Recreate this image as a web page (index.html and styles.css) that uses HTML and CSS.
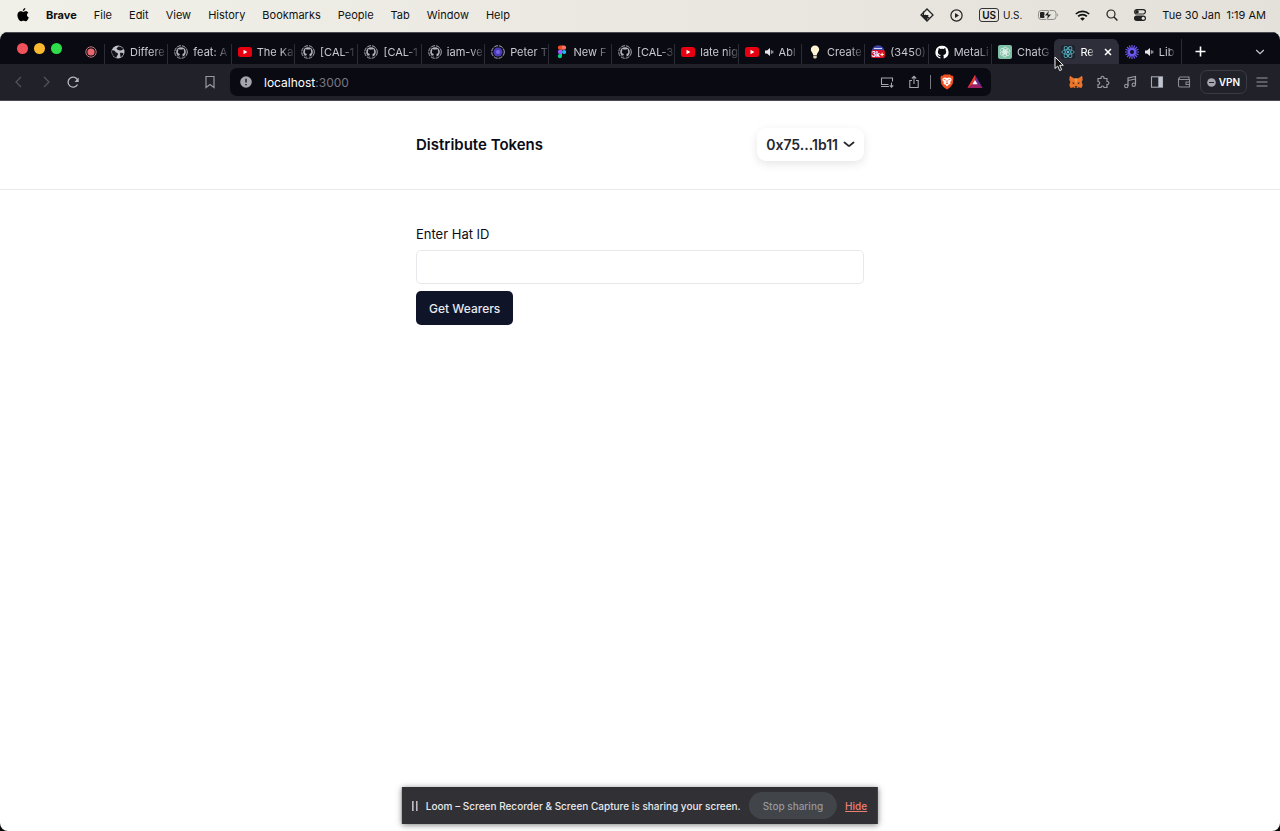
FILE: index.html
```html
<!DOCTYPE html>
<html lang="en">
<head>
  <meta charset="UTF-8">
  <meta name="viewport" content="width=device-width, initial-scale=1.0">
  <title>Distribute Tokens</title>
  <link rel="stylesheet" href="styles.css">
</head>
<body>

  <!-- Shared icons -->
  <svg class="sprite" aria-hidden="true">
    <symbol id="github-ring" viewBox="0 0 14 14">
      <circle cx="7" cy="7" r="6.3" fill="none" stroke="#a9a9b2" stroke-width="1" stroke-dasharray="4 1"/>
      <circle cx="7" cy="7" r="4.8" fill="#b4b4bc"/>
      <path d="M4.3 3.9l1.5.7a4.500 4.500 0 0 1 2.400 0l1.500-.7c.3.700.2 1.200.1 1.500.9 1.200.6 3.300-1.500 3.700.3.400.3.700.3 2.800H5.600v-1.200c-.9.200-1.300-.3-1.600-.9.500.100.9.500 1.600.2 0-.400.100-.700.300-.9-2.200-.400-2.500-2.500-1.600-3.700-.1-.400-.2-.9 0-1.500z" fill="#0b0a13"/>
    </symbol>
    <symbol id="youtube" viewBox="0 0 14 14">
      <rect x="0" y="2" width="14" height="10" rx="2.500" fill="#e60010"/>
      <path d="M5.500 4.800v4.400L9.400 7z" fill="#fff"/>
    </symbol>
    <symbol id="speaker" viewBox="0 0 10 10">
      <path d="M1 3.500h2L6 1v8L3 6.500H1z" fill="#e6e6ea"/>
      <path d="M7.300 3.200v3.600M8.800 3.700v2.600" stroke="#c6c6cc" stroke-width=".9"/>
    </symbol>
  </svg>

  <!-- System menu bar -->
  <header class="menubar">
    <svg class="apple" viewBox="0 0 12 14"><path d="M8.300 0c.1 1.600-1.100 2.900-2.500 2.900C5.700 1.500 7 .2 8.300 0zM11.300 4.800c-2 1.200-1.600 3.900.5 4.700-.6 1.700-1.700 3.800-3 3.800-.9 0-1.300-.5-2.400-.5s-1.500.5-2.300.5C2.300 13.300.4 10 .4 7.300c0-2.700 1.700-4.100 3.300-4.100 1.100 0 1.900.7 2.600.7.600 0 1.600-.8 3-.7.8 0 1.600.5 2 1.600z"/></svg>
    <nav class="menus">
      <b>Brave</b>
      <span>File</span>
      <span>Edit</span>
      <span>View</span>
      <span>History</span>
      <span>Bookmarks</span>
      <span>People</span>
      <span>Tab</span>
      <span>Window</span>
      <span>Help</span>
    </nav>
    <div class="status">
      <svg width="14" height="14" viewBox="0 0 14 14"><path d="M7 1L13 7 7 13 1 7z" fill="#efeee8" stroke="#222" stroke-width="1.300"/><path d="M1 7h7.500L7 13z" fill="#222"/><path d="M3.500 3.500V7M5 7l4.500 3.500" stroke="#222" stroke-width="1.200"/></svg>
      <svg width="13" height="13" viewBox="0 0 13 13"><circle cx="6.500" cy="6.500" r="5.600" fill="none" stroke="#222" stroke-width="1.200"/><path d="M5 4v5l4-2.500z" fill="#222"/></svg>
      <span class="input-source"><b>US</b><small>U.S.</small></span>
      <svg width="21" height="12" viewBox="0 0 21 12"><rect x=".5" y="1.500" width="17.500" height="9" rx="2.800" fill="none" stroke="#8c8b87"/><rect x="2" y="3" width="4.500" height="6" rx="1" fill="#222"/><path d="M19.300 4.500c1.300.5 1.300 2.500 0 3z" fill="#8c8b87"/><path d="M11.500.8L6.200 6.800h3.200l-1 4.400 5.300-6h-3.200z" fill="#222" stroke="#e9e8e1" stroke-width=".7"/></svg>
      <svg width="15" height="11" viewBox="0 0 15 11"><path d="M.8 4a9.600 9.600 0 0 1 13.400 0M3.100 6.400a6.300 6.300 0 0 1 8.800 0" fill="none" stroke="#111" stroke-width="1.700"/><path d="M5.200 8.500a3.400 3.400 0 0 1 4.600 0L7.500 10.800z" fill="#111"/></svg>
      <svg width="12" height="12" viewBox="0 0 12 12"><circle cx="5" cy="5" r="4" fill="none" stroke="#222" stroke-width="1.200"/><path d="M8 8l3.400 3.400" stroke="#222" stroke-width="1.400"/></svg>
      <svg width="12" height="12" viewBox="0 0 12 12"><rect x=".6" y=".6" width="10.800" height="4.400" rx="2.200" fill="none" stroke="#222" stroke-width="1.200"/><circle cx="3" cy="2.800" r="1.800" fill="#222"/><rect x="0" y="6.500" width="12" height="5.500" rx="2.700" fill="#222"/><circle cx="9.200" cy="9.200" r="1.500" fill="#e9e8e1"/></svg>
      <time class="clock"><span>Tue 30 Jan</span><span>1:19 AM</span></time>
    </div>
  </header>

  <div class="window">

    <!-- Tabs -->
    <div class="tabstrip">
      <div class="lights">
        <i class="light red"></i>
        <i class="light yellow"></i>
        <i class="light green"></i>
      </div>
      <button class="pinned" aria-label="Recording">
        <svg width="12" height="12" viewBox="0 0 12 12"><circle cx="6" cy="6" r="5.200" fill="none" stroke="#b9777d"/><circle cx="6" cy="6" r="3.600" fill="#ea686d"/></svg>
      </button>
      <div class="tabs">
        <div class="tab"><button class="tab-open">
          <svg class="favicon" viewBox="0 0 14 14"><circle cx="7" cy="7" r="6.500" fill="#c0c0c6"/><path d="M1 5.500c2-.5 3 .5 3.500 1.500s2.500.5 2.500 2-1.500 1.500-1.500 3.800C2.500 12 .5 9 1 5.500zM7.500 1.500c2.500-.2 4 1.300 5 3-1.500-.3-2 1.300-3.500 1S6 4.500 5.500 3.500zM9 8c1.500-.5 3 0 3.500.5-.5 2-1.500 3-3 3.700z" fill="#14131c"/></svg>
          <span class="title">Differe</span></button></div>
        <div class="tab"><button class="tab-open"><svg class="favicon"><use href="#github-ring"/></svg><span class="title">feat: A</span></button></div>
        <div class="tab"><button class="tab-open"><svg class="favicon"><use href="#youtube"/></svg><span class="title">The Ka</span></button></div>
        <div class="tab"><button class="tab-open"><svg class="favicon"><use href="#github-ring"/></svg><span class="title">[CAL-1</span></button></div>
        <div class="tab"><button class="tab-open"><svg class="favicon"><use href="#github-ring"/></svg><span class="title">[CAL-1</span></button></div>
        <div class="tab"><button class="tab-open"><svg class="favicon"><use href="#github-ring"/></svg><span class="title">iam-ve</span></button></div>
        <div class="tab"><button class="tab-open">
          <svg class="favicon" viewBox="0 0 14 14"><circle cx="7" cy="7" r="6.300" fill="none" stroke="#a9a9b2" stroke-dasharray="4 1"/><circle cx="7" cy="7" r="4.500" fill="#4b3bb8"/><circle cx="7" cy="7" r="2" fill="#7567e6"/></svg>
          <span class="title">Peter T</span></button></div>
        <div class="tab"><button class="tab-open">
          <svg class="favicon" viewBox="0 0 14 14"><path d="M7 .500H5a2.100 2.100 0 0 0 0 4.300h2z" fill="#f24e1e"/><path d="M7 .500h2a2.100 2.100 0 0 1 0 4.300H7z" fill="#ff7262"/><path d="M7 4.800H5a2.100 2.100 0 0 0 0 4.300h2z" fill="#a259ff"/><circle cx="9.100" cy="7" r="2.100" fill="#1abcfe"/><path d="M7 9.100H5a2.100 2.100 0 1 0 2 2.200z" fill="#0acf83"/></svg>
          <span class="title">New F</span></button></div>
        <div class="tab"><button class="tab-open"><svg class="favicon"><use href="#github-ring"/></svg><span class="title">[CAL-3</span></button></div>
        <div class="tab"><button class="tab-open"><svg class="favicon"><use href="#youtube"/></svg><span class="title">late nig</span></button></div>
        <div class="tab"><button class="tab-open"><svg class="favicon"><use href="#youtube"/></svg><svg class="speaker"><use href="#speaker"/></svg><span class="title">Abl</span></button></div>
        <div class="tab"><button class="tab-open">
          <svg class="favicon" viewBox="0 0 14 14"><path d="M7 .5c2.500 0 4.200 1.800 4.200 4 0 2.500-2.200 3-2.400 5.500H5.200C5 7.500 2.800 7 2.800 4.500 2.800 2.300 4.500.5 7 .5z" fill="#fff5d2"/><path d="M5.300 10.400h3.400v2L8 13.500H6l-.7-1.100z" fill="#d8d0b2"/></svg>
          <span class="title">Create</span></button></div>
        <div class="tab"><button class="tab-open">
          <svg class="favicon" viewBox="0 0 14 14"><circle cx="7" cy="6.500" r="6.300" fill="#4146ad"/><path d="M3 3.500h8" stroke="#d8d8f0"/><rect x="0" y="5" width="14" height="8" rx="2" fill="#d5132b"/><text x="7" y="11.500" text-anchor="middle" class="badge">3k+</text></svg>
          <span class="title">(3450)</span></button></div>
        <div class="tab"><button class="tab-open">
          <svg class="favicon" viewBox="0 0 16 16"><path fill="#fff" d="M8 .8a7.500 7.500 0 0 0-2.400 14.600c.4.100.5-.2.500-.4v-1.400c-2.100.5-2.500-1-2.500-1-.3-.9-.8-1.100-.8-1.100-.7-.5.100-.5.100-.5.700.1 1.100.8 1.100.8.700 1.100 1.800.8 2.200.6.100-.5.300-.8.500-1-1.700-.2-3.400-.8-3.400-3.700 0-.8.300-1.500.8-2-.1-.2-.3-1 .1-2 0 0 .6-.2 2 .8a7 7 0 0 1 3.700 0c1.400-1 2-.8 2-.8.4 1 .2 1.800.1 2 .5.500.8 1.200.8 2 0 2.900-1.800 3.500-3.400 3.700.3.200.5.700.5 1.400V15c0 .2.100.5.500.4A7.500 7.500 0 0 0 8 .8z"/></svg>
          <span class="title">MetaLi</span></button></div>
        <div class="tab"><button class="tab-open">
          <svg class="favicon" viewBox="0 0 14 14"><rect width="14" height="14" rx="2" fill="#7fbfa6"/><g fill="none" stroke="#e4f5ee" stroke-width=".7"><rect x="5.500" y="2" width="3.500" height="6" rx="1.700"/><rect x="5.500" y="2" width="3.500" height="6" rx="1.700" transform="rotate(60 7 7)"/><rect x="5.500" y="2" width="3.500" height="6" rx="1.700" transform="rotate(120 7 7)"/><rect x="5.500" y="2" width="3.500" height="6" rx="1.700" transform="rotate(180 7 7)"/><rect x="5.500" y="2" width="3.500" height="6" rx="1.700" transform="rotate(240 7 7)"/><rect x="5.500" y="2" width="3.500" height="6" rx="1.700" transform="rotate(300 7 7)"/></g></svg>
          <span class="title">ChatG</span></button></div>
        <div class="tab active"><button class="tab-open">
          <svg class="favicon" viewBox="0 0 14 14"><rect width="14" height="14" rx="2" fill="#20232a"/><g fill="none" stroke="#4fa9bd" stroke-width=".9"><ellipse cx="7" cy="7" rx="6.200" ry="2.400"/><ellipse cx="7" cy="7" rx="6.200" ry="2.400" transform="rotate(60 7 7)"/><ellipse cx="7" cy="7" rx="6.200" ry="2.400" transform="rotate(120 7 7)"/></g><circle cx="7" cy="7" r="1.200" fill="#5fc4da"/></svg>
          <span class="title">Re</span></button>
          <button class="tab-close" aria-label="Close tab"><svg width="8" height="8" viewBox="0 0 8 8"><path d="M1 1l6 6M7 1L1 7" stroke="#fff" stroke-width="1.500"/></svg></button>
          <!-- Mouse pointer -->
          <svg class="pointer" width="11" height="16" viewBox="0 0 11 16"><path d="M1 1v11.500l2.700-2.400 2 4.500 2-.9-2-4.400h3.600z" fill="#111" stroke="#eee" stroke-width="1"/></svg>
        </div>
        <div class="tab"><button class="tab-open">
          <svg class="favicon" viewBox="0 0 14 14"><g stroke="#6a58f2" stroke-width="1.200"><path d="M7 0v14M0 7h14M2 2l10 10M12 2L2 12M4.300.5l5.400 13M9.700.5l-5.400 13M.5 4.300l13 5.400M.5 9.700l13-5.400"/></g><circle cx="7" cy="7" r="4" fill="#6a58f2"/><circle cx="7" cy="7" r="2" fill="#100f20"/></svg>
          <svg class="speaker"><use href="#speaker"/></svg><span class="title">Lib</span></button></div>
      </div>
      <button class="new-tab" aria-label="New tab"><svg width="11" height="11" viewBox="0 0 11 11"><path d="M5.500.5v10M.5 5.500h10" stroke="#fff" stroke-width="1.600"/></svg></button>
      <button class="tab-search" aria-label="Search tabs"><svg width="10" height="6" viewBox="0 0 10 6"><path d="M1.200 1L5 4.600 8.800 1" fill="none" stroke="#c4c4cb" stroke-width="1.300"/></svg></button>
    </div>

    <!-- Toolbar -->
    <div class="toolbar">
      <div class="tools-left">
        <button aria-label="Back"><svg width="14" height="14" viewBox="0 0 14 14"><path d="M9 2L4 7l5 5" fill="none" stroke="#55555f" stroke-width="1.200"/></svg></button>
        <button aria-label="Forward"><svg width="14" height="14" viewBox="0 0 14 14"><path d="M5 2l5 5-5 5" fill="none" stroke="#55555f" stroke-width="1.200"/></svg></button>
        <button aria-label="Reload"><svg width="14" height="14" viewBox="0 0 14 14"><path d="M11.500 9.500A5 5 0 1 1 11.800 5.500" fill="none" stroke="#b8b8c0" stroke-width="1.300"/><path d="M12.700 2.500v4.400H8.500z" fill="#b8b8c0"/></svg></button>
        <button class="bookmark" aria-label="Bookmark"><svg width="14" height="14" viewBox="0 0 14 14"><path d="M3 1.500h8v11L7 9.500l-4 3z" fill="none" stroke="#9797a0" stroke-width="1.200"/></svg></button>
      </div>
      <div class="urlbar">
        <svg width="12" height="12" viewBox="0 0 12 12"><circle cx="6" cy="6" r="5.800" fill="#a5a5af"/><path d="M6 2.800v3.800M6 7.900v1.400" stroke="#15141e" stroke-width="1.400"/></svg>
        <span class="url">localhost<em>:3000</em></span>
        <div class="url-actions">
          <button aria-label="Install app"><svg width="14" height="14" viewBox="0 0 14 14"><path d="M12.500 6.500V3h-11v6.500h7M1 11.500h8M11.500 7.500V12M9.700 10.300l1.800 1.800 1.800-1.800" fill="none" stroke="#a5a5af" stroke-width="1.100"/></svg></button>
          <button aria-label="Share"><svg width="14" height="14" viewBox="0 0 14 14"><path d="M5 5.500H2.800v7h8.400v-7H9M7 9V1.500M4.800 3.500L7 1.300l2.200 2.200" fill="none" stroke="#a5a5af" stroke-width="1.100"/></svg></button>
          <i class="divider"></i>
          <button aria-label="Brave Shields"><svg width="14" height="16" viewBox="0 0 14 16"><path d="M4 .5h6l1.300 1.300 1.700-.1L13.500 4l-.8 6L10 13.500 7 15.500 4 13.500 1.300 10 .5 4 1 1.700l1.700.1z" fill="#f25022"/><path d="M3 4l2-.5 2 .5 2-.5 2 .5.700 2-1.500 2 .3 1.800L8.300 11 7 12.500 5.700 11l-2.200-1.200L3.800 8 2.300 6z" fill="#fff"/><path d="M3.600 5.300l2 .6M10.400 5.300l-2 .6M7 6v3M5.700 10l1.300-.8 1.300.8" stroke="#f25022" stroke-width=".8" fill="none"/></svg></button>
          <button aria-label="Brave Rewards"><svg width="16" height="14" viewBox="0 0 16 14"><path d="M8 0L.5 13h15z" fill="#9e1f63"/><path d="M8 0l7.500 13L10.500 9 8 5z" fill="#662d91"/><path d="M8 0L.5 13l5-4L8 5z" fill="#e8392c"/><path d="M8 5l2.600 4.300H5.400z" fill="#fff"/></svg></button>
        </div>
      </div>
      <div class="tools-right">
        <button aria-label="MetaMask"><svg width="14" height="14" viewBox="0 0 14 14"><path d="M.8.8l4.400 2.700h3.600L13.200.8l.5 4-1 2.200 1 3-1.200 3-3-.8-1 .8h-3l-1-.8-3 .8-1.200-3 1-3-1-2.200z" fill="#e9752a"/><path d="M5.200 3.500L7 9l1.800-5.500z" fill="#f39a4b"/><path d="M3 7.500l2.400.3-.7 1.500zM11 7.500l-2.400.3.700 1.500zM5.600 11.300h2.800l-.5 1.500H6.100z" fill="#30211e"/></svg></button>
        <button aria-label="Extensions"><svg width="14" height="14" viewBox="0 0 14 14"><path d="M2 3.500h3c-.5-3 3.500-3 3 0h3v3c2.500-.3 2.500 3.300 0 3v3H8c0-2-3-2-3 0H2v-3c2.300 0 2.300-3 0-3z" fill="none" stroke="#9a9aa4" stroke-width="1.200"/></svg></button>
        <button aria-label="Playlist"><svg width="14" height="14" viewBox="0 0 14 14"><path d="M5 11V3l7.500-1.500v8M5 5.500L12.500 4" fill="none" stroke="#9a9aa4" stroke-width="1.200"/><circle cx="3.300" cy="11" r="1.700" fill="none" stroke="#9a9aa4" stroke-width="1.100"/><circle cx="10.800" cy="9.700" r="1.700" fill="none" stroke="#9a9aa4" stroke-width="1.100"/></svg></button>
        <button aria-label="Sidebar"><svg width="14" height="14" viewBox="0 0 14 14"><rect x="1.500" y="1.800" width="11" height="10.400" fill="none" stroke="#a5a5af" stroke-width="1.100"/><rect x="8.300" y="2" width="4" height="10" fill="#bfc5d0"/></svg></button>
        <button aria-label="Wallet"><svg width="14" height="14" viewBox="0 0 14 14"><path d="M12 4.500V2H3a1.300 1.300 0 0 0 0 2.500h9.500V12H3a1.500 1.500 0 0 1-1.500-1.500V3.300M12.500 7H9v2.500h3.500" fill="none" stroke="#8b8b95" stroke-width="1.100"/></svg></button>
        <button class="vpn"><svg width="9" height="9" viewBox="0 0 9 9"><circle cx="4.500" cy="4.500" r="4.300" fill="#a5a5af"/><path d="M2 4.500h5" stroke="#22222c" stroke-width="1.200"/></svg>VPN</button>
        <button aria-label="Menu"><svg width="12" height="12" viewBox="0 0 12 12"><path d="M.5 2h11M.5 6h11M.5 10h11" stroke="#9a9aa4" stroke-width="1.100"/></svg></button>
      </div>
    </div>

    <!-- Page -->
    <div class="page">
      <header class="site-header">
        <div class="container header-row">
          <h1>Distribute Tokens</h1>
          <button class="wallet">0x75...1b11 <svg width="12" height="7" viewBox="0 0 12 7"><path d="M1.500 1.500L5 4.400c.700.500 1.300.500 2 0l3.500-2.900" fill="none" stroke="#25292e" stroke-width="1.800" stroke-linecap="round"/></svg></button>
        </div>
      </header>
      <main class="container">
        <form class="hat-form">
          <label for="hat-id">Enter Hat ID</label>
          <input type="text" id="hat-id">
          <button type="button" class="submit">Get Wearers</button>
        </form>
      </main>
    </div>
  </div>

  <!-- Screen sharing notice -->
  <div class="sharing">
    <svg width="6" height="10" viewBox="0 0 6 10"><path d="M1 0v10M5 0v10" stroke="#d5d5da" stroke-width="1.400"/></svg>
    <span>Loom – Screen Recorder &amp; Screen Capture is sharing your screen.</span>
    <button class="stop">Stop sharing</button>
    <a href="#">Hide</a>
  </div>

</body>
</html>
```

FILE: styles.css
```css
* {
  box-sizing: border-box;
}

body {
  margin: 0;
  min-height: 100vh;
  display: flex;
  flex-direction: column;
  background: linear-gradient(#e9e8e1 50%, #0a0a0a 50%);
  color: #0a0c16;
  font-family: Inter, "Liberation Sans", sans-serif;
  font-size: 11px;
}

button {
  display: flex;
  align-items: center;
  margin: 0;
  padding: 0;
  border: none;
  background: none;
  color: inherit;
  font: inherit;
  cursor: pointer;
}

svg {
  display: block;
  flex: none;
}

.sprite {
  position: absolute;
  width: 0;
  height: 0;
}

/* System menu bar */
.menubar {
  display: flex;
  align-items: center;
  height: 32px;
  padding: 0 14px 2px 17px;
  background: linear-gradient(90deg, #f0efe8, #e4e1da);
  color: #111;
}

.apple {
  width: 12px;
  height: 14px;
  margin-right: 17px;
}

.menus {
  display: flex;
  gap: 17px;
}

.status {
  display: flex;
  align-items: center;
  gap: 16px;
  margin-left: auto;
}

.input-source {
  display: flex;
  align-items: center;
  gap: 4px;
}

.input-source b {
  padding: 0 2px;
  border: 1px solid #333;
  border-radius: 3px;
  font-size: 10px;
  font-weight: 600;
  line-height: 12px;
}

.input-source small {
  font-size: 10px;
}

.clock {
  display: flex;
  gap: 6px;
}

/* Browser window */
.window {
  flex: 1;
  display: flex;
  flex-direction: column;
  overflow: hidden;
  border-radius: 8px;
  background: #fff;
}

.tabstrip {
  display: flex;
  height: 32px;
  border-top: 1px solid #4a4a50;
  background: #0a0a13;
  color: #c9c9d0;
}

.lights {
  display: flex;
  gap: 6px;
  padding: 10px 0 0 17px;
}

.light {
  width: 11px;
  height: 11px;
  border-radius: 50%;
}

.red {
  background: #f1515b;
}

.yellow {
  background: #fbb930;
}

.green {
  background: #2fdc4a;
}

.pinned {
  padding: 6px 7px 0 23px;
}

.tabs {
  flex: 1;
  display: flex;
  min-width: 0;
}

.tab {
  position: relative;
  flex: 1;
  display: flex;
  min-width: 0;
  margin-top: 6px;
  padding-left: 7px;
}

/* Separator before each tab */
.tab::before {
  content: "";
  position: absolute;
  left: 0;
  top: 5px;
  bottom: 0;
  width: 1px;
  background: #2c2c37;
}

.tab:last-child {
  border-right: 1px solid #2c2c37;
}

.tab-open {
  flex: 1;
  min-width: 0;
  gap: 5px;
}

.favicon {
  width: 14px;
  height: 14px;
}

.speaker {
  width: 10px;
  height: 10px;
}

.title {
  text-align: left;
  white-space: nowrap;
  -webkit-mask-image: linear-gradient(90deg, #000 65%, rgba(0, 0, 0, 0.2));
  mask-image: linear-gradient(90deg, #000 65%, rgba(0, 0, 0, 0.2));
}

.badge {
  fill: #fff;
  font-size: 7px;
  font-weight: 700;
}

.active {
  border-radius: 5px 5px 0 0;
  background: #2d2e39;
  color: #fff;
}

.active::before {
  display: none;
}

.tab-close {
  padding-right: 6px;
}

.pointer {
  position: absolute;
  left: 0;
  top: 17px;
  z-index: 2;
}

.new-tab {
  padding: 6px 13px 0;
}

.tab-search {
  margin-left: 36px;
  padding: 6px 15px 0 0;
}

/* Toolbar */
.toolbar {
  display: flex;
  height: 37px;
  border-bottom: 1px solid #4b4a50;
  background: #21212a;
  color: #fff;
}

.tools-left,
.tools-right,
.url-actions {
  display: flex;
  align-items: center;
  gap: 13px;
}

.tools-left {
  flex: 0 0 230px;
  padding: 0 13px 0 12px;
}

.bookmark {
  margin-left: auto;
}

.tools-right {
  flex: 0 0 289px;
  justify-content: flex-end;
  padding-right: 12px;
}

.urlbar {
  flex: 1;
  display: flex;
  align-items: center;
  gap: 12px;
  margin: 4px 0;
  padding: 0 8px 0 10px;
  border-radius: 7px;
  background: #0a0a13;
}

.url {
  font-size: 12px;
}

.url em {
  color: #777781;
  font-style: normal;
}

.url-actions {
  margin-left: auto;
}

.divider {
  width: 1px;
  height: 14px;
  margin: 0 -4px;
  background: #777781;
}

.vpn {
  gap: 3px;
  height: 24px;
  margin: 0 -4px;
  padding: 0 6px;
  border: 1px solid #3b3b46;
  border-radius: 7px;
  font-size: 10px;
  font-weight: 600;
}

/* Page */
.page {
  flex: 1;
}

.container {
  width: 100%;
  max-width: 448px;
  margin: 0 auto;
}

.site-header {
  padding: 27px 0 28px;
  border-bottom: 1px solid #e9e9eb;
}

.header-row {
  display: flex;
  align-items: center;
  justify-content: space-between;
}

h1 {
  margin: 0;
  font-size: 15px;
  font-weight: 600;
}

.wallet {
  gap: 5px;
  height: 33px;
  padding: 0 9px;
  border-radius: 9px;
  background: #fff;
  box-shadow: 0 3px 10px rgba(0, 0, 0, 0.1);
  color: #25292e;
  font-size: 14px;
  font-weight: 600;
}

.hat-form {
  display: flex;
  flex-direction: column;
  align-items: flex-start;
  padding-top: 35px;
}

.hat-form label {
  margin-bottom: 6px;
  font-size: 13px;
  line-height: 19px;
}

.hat-form input {
  width: 100%;
  height: 34px;
  padding: 0 10px;
  border: 1px solid #e6e8ec;
  border-radius: 5px;
  background: #fff;
  font: inherit;
}

.submit {
  height: 34px;
  margin-top: 7px;
  padding: 0 13px;
  border-radius: 5px;
  background: #0f1428;
  color: #e8eaf0;
  font-size: 12px;
  font-weight: 500;
}

/* Screen sharing notice */
.sharing {
  position: absolute;
  left: 50%;
  bottom: 7px;
  transform: translateX(-50%);
  display: flex;
  align-items: center;
  gap: 8px;
  height: 37px;
  padding: 0 11px 0 10px;
  background: #303035;
  box-shadow: 0 1px 6px rgba(0, 0, 0, 0.5);
  color: #e9e9ec;
  font-size: 10px;
  font-weight: 500;
  white-space: nowrap;
}

.stop {
  height: 27px;
  padding: 0 14px;
  border-radius: 14px;
  background: #414449;
  color: #96989d;
}

.sharing a {
  color: #ec7f74;
}
```
